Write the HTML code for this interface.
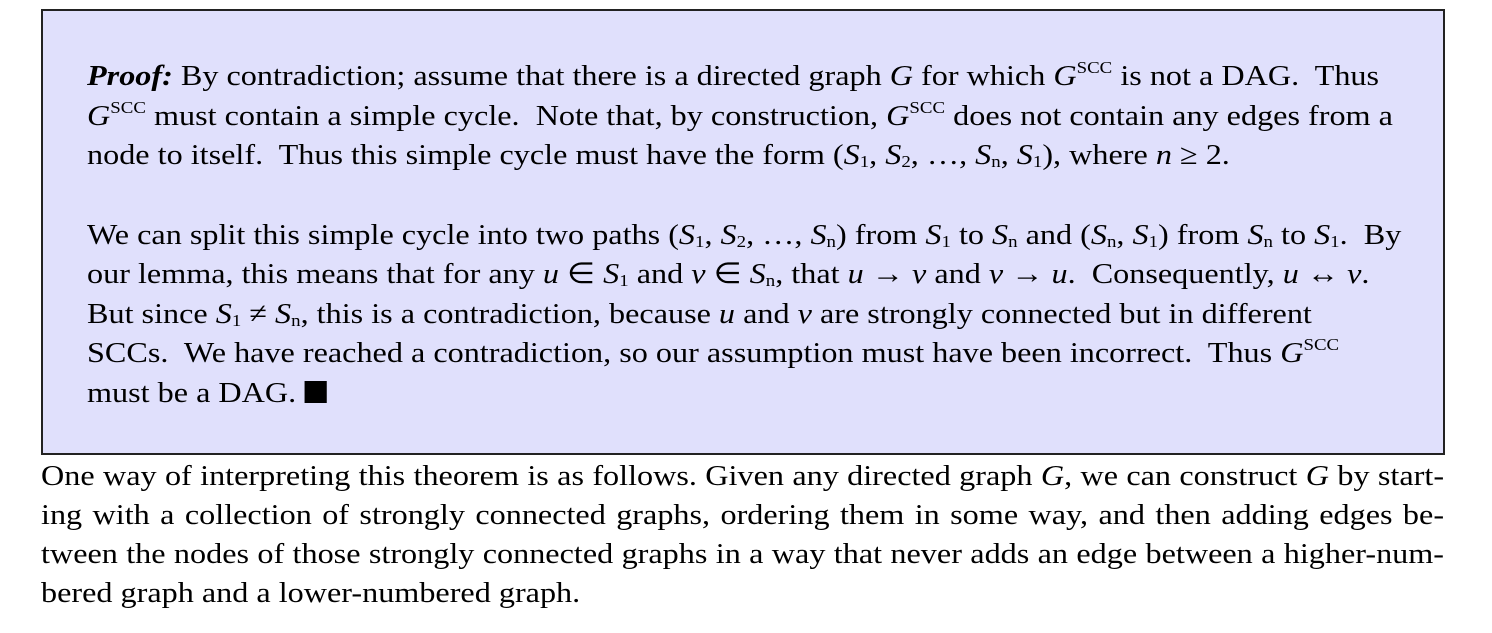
<!DOCTYPE html>
<html><head><meta charset="utf-8"><style>
body{margin:0;width:1492px;height:633px;background:#fff;font-family:"Liberation Serif",serif;font-size:29px;color:#000;position:relative;overflow:hidden}
.box{position:absolute;left:41px;top:9px;width:1400px;height:442px;background:#e0e0fc;border:2px solid #222}
.l{position:absolute;left:87px;white-space:pre;line-height:34px;transform:scaleX(1.11);transform-origin:0 0}
.j{position:absolute;left:41px;width:1264px;line-height:34px;text-align:justify;text-align-last:justify;white-space:nowrap;transform:scaleX(1.11);transform-origin:0 0}
sup{font-size:17px;vertical-align:0;position:relative;top:-12px}
sub{font-size:17px;vertical-align:0;position:relative;top:3px}
i{font-style:italic}
.sq{display:inline-block;width:20px;height:22px;background:#000;vertical-align:-1px}
</style></head><body>
<div class="box"></div>
<div class="l" style="top:59px"><b><i>Proof:</i></b> By contradiction; assume that there is a directed graph <i>G</i> for which <i>G</i><sup>SCC</sup> is not a DAG.  Thus</div>
<div class="l" style="top:99px"><i>G</i><sup>SCC</sup> must contain a simple cycle.  Note that, by construction, <i>G</i><sup>SCC</sup> does not contain any edges from a</div>
<div class="l" style="top:138px">node to itself.  Thus this simple cycle must have the form (<i>S</i><sub>1</sub>, <i>S</i><sub>2</sub>, …, <i>S</i><sub>n</sub>, <i>S</i><sub>1</sub>), where <i>n</i> ≥ 2.</div>
<div class="l" style="top:218px">We can split this simple cycle into two paths (<i>S</i><sub>1</sub>, <i>S</i><sub>2</sub>, …, <i>S</i><sub>n</sub>) from <i>S</i><sub>1</sub> to <i>S</i><sub>n</sub> and (<i>S</i><sub>n</sub>, <i>S</i><sub>1</sub>) from <i>S</i><sub>n</sub> to <i>S</i><sub>1</sub>.  By</div>
<div class="l" style="top:257px">our lemma, this means that for any <i>u</i> ∈ <i>S</i><sub>1</sub> and <i>v</i> ∈ <i>S</i><sub>n</sub>, that <i>u</i> → <i>v</i> and <i>v</i> → <i>u</i>.  Consequently, <i>u</i> ↔ <i>v</i>.</div>
<div class="l" style="top:297px">But since <i>S</i><sub>1</sub> ≠ <i>S</i><sub>n</sub>, this is a contradiction, because <i>u</i> and <i>v</i> are strongly connected but in different</div>
<div class="l" style="top:336px">SCCs.  We have reached a contradiction, so our assumption must have been incorrect.  Thus <i>G</i><sup>SCC</sup></div>
<div class="l" style="top:376px">must be a DAG. <span class="sq"></span></div>
<div class="j" style="top:459px">One way of interpreting this theorem is as follows.  Given any directed graph <i>G</i>, we can construct <i>G</i> by start-</div>
<div class="j" style="top:498px">ing with a collection of strongly connected graphs, ordering them in some way, and then adding edges be-</div>
<div class="j" style="top:537px">tween the nodes of those strongly connected graphs in a way that never adds an edge between a higher-num-</div>
<div class="l" style="top:576px;left:41px">bered graph and a lower-numbered graph.</div>
</body></html>
